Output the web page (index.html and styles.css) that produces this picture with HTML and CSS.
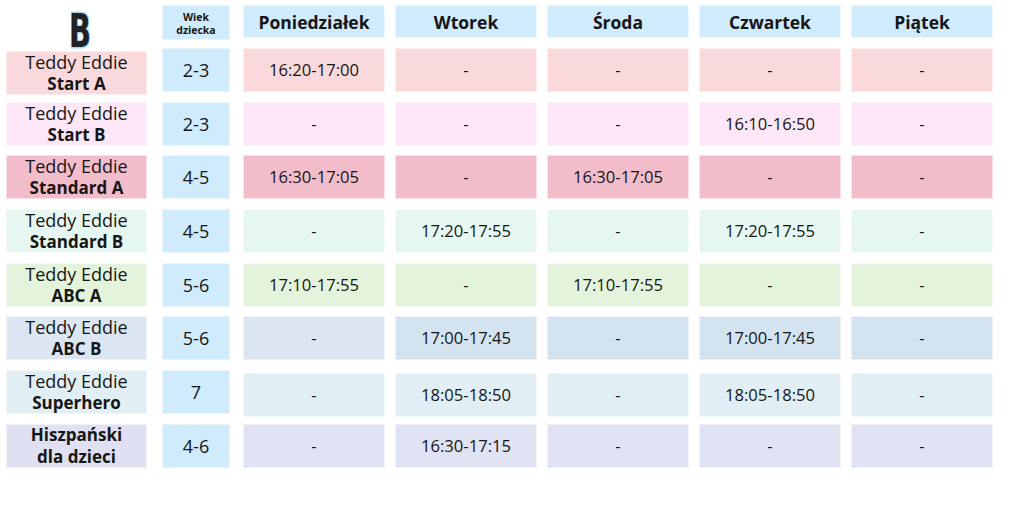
FILE: index.html
```html
<!DOCTYPE html>
<html lang="pl">
<head>
<meta charset="utf-8">
<title>Plan zajęć</title>
<link rel="stylesheet" href="styles.css">
</head>
<body>
<div class="grid">
  <div class="logo">
    <svg class="logo-svg" width="30" height="38" viewBox="0 0 30 38" aria-label="B">
      <defs>
        <pattern id="speck" width="4" height="4" patternUnits="userSpaceOnUse">
          <rect width="4" height="4" fill="#1c1c1c"/>
          <circle cx="1" cy="1" r="0.6" fill="#5a5a5a"/>
          <circle cx="3" cy="3" r="0.5" fill="#444"/>
        </pattern>
      </defs>
      <text x="3" y="34" class="logo-text" textLength="22" lengthAdjust="spacingAndGlyphs">B</text>
    </svg>
  </div>
  <div class="cell head age-head">Wiek<br>dziecka</div>
  <div class="cell head day">Poniedziałek</div>
  <div class="cell head day">Wtorek</div>
  <div class="cell head day">Środa</div>
  <div class="cell head day">Czwartek</div>
  <div class="cell head day">Piątek</div>

  <div class="cell name r1 low"><span>Teddy Eddie</span><b>Start A</b></div>
  <div class="cell age">2-3</div>
  <div class="cell r1">16:20-17:00</div>
  <div class="cell r1">-</div>
  <div class="cell r1">-</div>
  <div class="cell r1">-</div>
  <div class="cell r1">-</div>

  <div class="cell name r2"><span>Teddy Eddie</span><b>Start B</b></div>
  <div class="cell age">2-3</div>
  <div class="cell r2">-</div>
  <div class="cell r2">-</div>
  <div class="cell r2">-</div>
  <div class="cell r2">16:10-16:50</div>
  <div class="cell r2">-</div>

  <div class="cell name r3"><span>Teddy Eddie</span><b>Standard A</b></div>
  <div class="cell age">4-5</div>
  <div class="cell r3">16:30-17:05</div>
  <div class="cell r3">-</div>
  <div class="cell r3">16:30-17:05</div>
  <div class="cell r3">-</div>
  <div class="cell r3">-</div>

  <div class="cell name r4"><span>Teddy Eddie</span><b>Standard B</b></div>
  <div class="cell age">4-5</div>
  <div class="cell r4">-</div>
  <div class="cell r4">17:20-17:55</div>
  <div class="cell r4">-</div>
  <div class="cell r4">17:20-17:55</div>
  <div class="cell r4">-</div>

  <div class="cell name r5"><span>Teddy Eddie</span><b>ABC A</b></div>
  <div class="cell age">5-6</div>
  <div class="cell r5">17:10-17:55</div>
  <div class="cell r5">-</div>
  <div class="cell r5">17:10-17:55</div>
  <div class="cell r5">-</div>
  <div class="cell r5">-</div>

  <div class="cell name r6l"><span>Teddy Eddie</span><b>ABC B</b></div>
  <div class="cell age">5-6</div>
  <div class="cell r6l">-</div>
  <div class="cell r6">17:00-17:45</div>
  <div class="cell r6">-</div>
  <div class="cell r6">17:00-17:45</div>
  <div class="cell r6">-</div>

  <div class="cell name r7"><span>Teddy Eddie</span><b>Superhero</b></div>
  <div class="cell age">7</div>
  <div class="cell r7 low">-</div>
  <div class="cell r7 low">18:05-18:50</div>
  <div class="cell r7 low">-</div>
  <div class="cell r7 low">18:05-18:50</div>
  <div class="cell r7 low">-</div>

  <div class="cell name r8n"><b>Hiszpański</b><b>dla dzieci</b></div>
  <div class="cell age">4-6</div>
  <div class="cell r8">-</div>
  <div class="cell r8">16:30-17:15</div>
  <div class="cell r8">-</div>
  <div class="cell r8">-</div>
  <div class="cell r8">-</div>
</div>
</body>
</html>
```

FILE: styles.css
```css
html, body {
  margin: 0;
  padding: 0;
  background: #ffffff;
}

body {
  width: 1024px;
  height: 512px;
  overflow: hidden;
  font-family: "Open Sans", "Noto Sans", sans-serif;
  color: #161616;
}

.grid {
  display: grid;
  grid-template-columns: 146px 71px repeat(5, 142px);
  grid-template-rows: 33.3px repeat(8, 44px);
  column-gap: 10px;
  row-gap: 9.7px;
  padding: 5px 0 0 6px;
}

.cell {
  display: flex;
  flex-direction: column;
  align-items: center;
  justify-content: center;
  text-align: center;
  box-sizing: border-box;
  border: 1px solid rgba(255, 255, 255, 0.55);
  font-size: 16.6px;
  line-height: 22px;
  height: 44px;
  white-space: nowrap;
}

.head {
  background: #d0ebfc;
  font-weight: 700;
  height: 35px;
}

.day {
  font-size: 17.5px;
  height: 33px;
}

.age-head {
  width: 68px;
  font-size: 10.5px;
  line-height: 13px;
  padding-top: 3px;
}

.age {
  width: 68px;
  background: #d0ebfc;
  font-size: 18px;
}

.name {
  width: 141px;
}

.name span {
  font-weight: 400;
  font-size: 18px;
}

.name b {
  font-weight: 700;
  font-size: 17px;
}

.low {
  margin-top: 3px;
}

.logo {
  display: flex;
  justify-content: center;
  align-items: flex-start;
  padding-left: 4px;
  height: 33px;
}

.logo-svg {
  display: block;
  margin-top: 8px;
  overflow: visible;
}

.logo-text {
  font-family: "DejaVu Sans", sans-serif;
  font-weight: 700;
  font-size: 47px;
  fill: url(#speck);
  stroke: #a6dcf5;
  stroke-width: 2.8px;
  stroke-linejoin: round;
  paint-order: stroke;
}

.r1 { background: #fad9dc; }
.r2 { background: #fce6f8; }
.r3 { background: #f2bccb; }
.r4 { background: #e6f7f1; }
.r5 { background: #e4f4dc; }
.r6 { background: #d4e3f0; }
.r6l { background: #dbe6f2; }
.r7 { background: #e1eff5; }
.r8 { background: #e0e3f3; }
.r8n { background: #dfe0f2; }
```
